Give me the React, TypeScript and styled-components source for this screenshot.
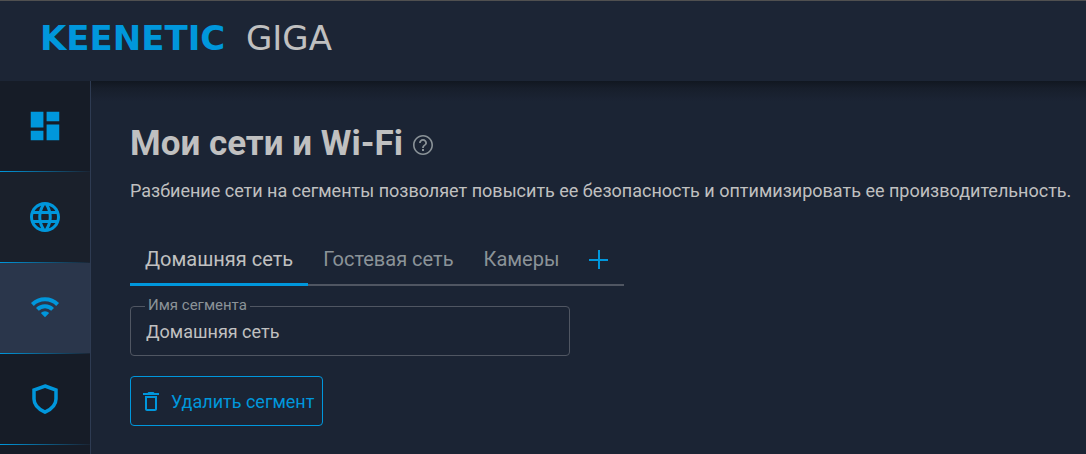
import React from "react";
import styled, { createGlobalStyle } from "styled-components";

const accent = "#0097dc";
const surface = "#1b2434";
const ink = "#c0c0c0";
const muted = "#8b9398";
const line = "#505662";

const GlobalStyle = createGlobalStyle`
  *, *::before, *::after { box-sizing: border-box; }
  body {
    margin: 0;
    background: ${surface};
    color: ${ink};
    font-family: Roboto, "Liberation Sans", sans-serif;
    font-size: 18px;
  }
  button, input { font: inherit; color: inherit; }
`;

const Page = styled.div`
  min-height: 100vh;
  display: flex;
  flex-direction: column;
`;

const Header = styled.header`
  display: flex;
  align-items: center;
  height: 81px;
  padding: 0 40px 6px;
  border-top: 1px solid #505050;
  background: #1c2535;
`;

const Brand = styled.a`
  display: flex;
  align-items: baseline;
  gap: 14px;
  color: ${ink};
  font-family: "DejaVu Sans", sans-serif;
  font-size: 34px;
  line-height: 40px;
  text-decoration: none;
`;

const BrandName = styled.span`
  min-width: 192px;
  color: ${accent};
  font-weight: 700;
`;

const Body = styled.div`
  flex: 1;
  display: flex;
`;

const Sidebar = styled.nav`
  flex: none;
  width: 91px;
  border-right: 1px solid #2e3b52;
  background: #161c27;
`;

const NavLink = styled.a<{ $tone?: string }>`
  display: flex;
  flex-direction: column;
  color: ${accent};
  background: ${(p) => p.$tone ?? "transparent"};

  &::after {
    content: "";
    height: 1px;
    background: linear-gradient(90deg, ${accent}, #1a2433);
  }
`;

const NavIcon = styled.span`
  display: flex;
  align-items: center;
  justify-content: center;
  height: 90px;
`;

const Main = styled.main`
  flex: 1;
  min-width: 0;
  padding: 40px 12px 28px 39px;
  background: linear-gradient(#111720, #171e2b 7px, ${surface} 20px);
`;

const TitleRow = styled.div`
  display: flex;
  align-items: center;
  gap: 8px;
`;

const Title = styled.h1`
  margin: 0;
  font-size: 35px;
  line-height: 46px;
  font-weight: 700;
`;

const HelpButton = styled.button`
  display: flex;
  margin-top: 2px;
  padding: 0;
  border: 0;
  background: none;
  color: ${muted};
`;

const Lead = styled.p`
  margin: 12px 0 32px;
  line-height: 24px;
`;

const Tabs = styled.div`
  display: flex;
  width: fit-content;
  height: 51px;
  box-shadow: inset 0 -2px ${line};
`;

const Tab = styled.button<{ $active?: boolean }>`
  display: flex;
  align-items: center;
  padding: 0 15px;
  border: 0;
  border-bottom: 3px solid ${(p) => (p.$active ? accent : "transparent")};
  background: none;
  color: ${(p) => (p.$active ? ink : muted)};
  font-size: 20px;
  line-height: 24px;
`;

const AddTab = styled(Tab)`
  color: ${accent};
`;

const Field = styled.div`
  position: relative;
  max-width: 440px;
  margin: 20px 0;
`;

const FieldLabel = styled.label`
  position: absolute;
  top: -10px;
  left: 15px;
  padding: 0 3px;
  background: ${surface};
  color: ${muted};
  font-size: 15px;
  line-height: 18px;
`;

const FieldInput = styled.input`
  display: block;
  width: 100%;
  height: 50px;
  padding: 0 15px;
  border: 1px solid ${line};
  border-radius: 4px;
  background: none;
  outline: none;
`;

const DeleteButton = styled.button`
  display: flex;
  align-items: center;
  gap: 8px;
  height: 50px;
  padding: 0 8px;
  border: 1px solid ${accent};
  border-radius: 4px;
  background: none;
  color: ${accent};
`;

type IconProps = { d: string; size: number };

const Icon = ({ d, size }: IconProps) => (
  <svg width={size} height={size} viewBox="0 0 24 24" fill="currentColor" aria-hidden="true">
    <path d={d} />
  </svg>
);

const paths = {
  dashboard: "M3 13h8V3H3v10zm0 8h8v-6H3v6zm10 0h8V11h-8v10zm0-18v6h8V3h-8z",
  globe:
    "M11.99 2C6.47 2 2 6.48 2 12s4.47 10 9.99 10C17.52 22 22 17.52 22 12S17.52 2 11.99 2zm6.93 6h-2.95c-.32-1.25-.78-2.45-1.38-3.56 1.84.63 3.37 1.91 4.33 3.56zM12 4.04c.83 1.2 1.48 2.53 1.91 3.96h-3.82c.43-1.43 1.08-2.76 1.91-3.96zM4.26 14C4.1 13.36 4 12.69 4 12s.1-1.36.26-2h3.38c-.08.66-.14 1.32-.14 2s.06 1.34.14 2H4.26zm.82 2h2.95c.32 1.25.78 2.45 1.38 3.56-1.84-.63-3.37-1.9-4.33-3.56zm2.95-8H5.08c.96-1.66 2.49-2.93 4.33-3.56C8.81 5.55 8.35 6.75 8.03 8zM12 19.96c-.83-1.2-1.48-2.53-1.91-3.96h3.82c-.43 1.43-1.08 2.76-1.91 3.96zM14.34 14H9.66c-.09-.66-.16-1.32-.16-2s.07-1.35.16-2h4.68c.09.65.16 1.32.16 2s-.07 1.34-.16 2zm.25 5.56c.6-1.11 1.06-2.31 1.38-3.56h2.95c-.96 1.65-2.49 2.93-4.33 3.56zM16.36 14c.08-.66.14-1.32.14-2s-.06-1.34-.14-2h3.38c.16.64.26 1.31.26 2s-.1 1.36-.26 2h-3.38z",
  help: "M11 18h2v-2h-2v2zm1-16C6.48 2 2 6.48 2 12s4.48 10 10 10 10-4.48 10-10S17.52 2 12 2zm0 18.4c-4.63 0-8.4-3.77-8.4-8.4s3.77-8.4 8.4-8.4 8.4 3.77 8.4 8.4-3.77 8.4-8.4 8.4zm0-14.4c-2.21 0-4 1.79-4 4h1.8c0-1.2 1-2.2 2.2-2.2s2.2 1 2.2 2.2c0 2-3.1 1.8-3.1 5h1.8c0-2.3 3.1-2.5 3.1-5 0-2.21-1.79-4-4-4z",
  trash: "M6 20c0 1.1.9 2 2 2h8c1.1 0 2-.9 2-2V7H6v13zM8 9h8v11H8V9zm7.500-5l-1-1h-5l-1 1H4v2h16V4z",
};

const WifiIcon = () => (
  <svg width="30" height="30" viewBox="0 0 30 30" fill="none" stroke="currentColor" strokeWidth="4" aria-hidden="true">
    <path d="M2.4 11.5a17.8 17.8 0 0 1 25.2 0" />
    <path d="M7.4 16.4a10.8 10.8 0 0 1 15.2 0" />
    <path d="M10.8 20a6 6 0 0 1 8.4 0L15 24.3z" fill="currentColor" stroke="none" />
  </svg>
);

const ShieldIcon = () => (
  <svg width="30" height="32" viewBox="0 0 30 32" fill="none" stroke="currentColor" strokeWidth="3.5" aria-hidden="true">
    <path d="M15 3l11 4v9c0 6-4.4 10.200-11 13.200C8.400 26.200 4 22 4 16V7z" />
  </svg>
);

const PlusIcon = () => (
  <svg width="20" height="20" viewBox="0 0 20 20" fill="none" stroke="currentColor" strokeWidth="2" aria-hidden="true">
    <path d="M10 1v19M0 11h19" />
  </svg>
);

export default function App() {
  return (
    <Page>
      <GlobalStyle />
      <Header>
        <Brand href="#home">
          <BrandName>KEENETIC</BrandName>
          <span>GIGA</span>
        </Brand>
      </Header>
      <Body>
        <Sidebar>
          <NavLink href="#dashboard" aria-label="Системный монитор">
            <NavIcon><Icon d={paths.dashboard} size={38} /></NavIcon>
          </NavLink>
          <NavLink href="#internet" aria-label="Интернет" $tone="#1a202b">
            <NavIcon><Icon d={paths.globe} size={36} /></NavIcon>
          </NavLink>
          <NavLink href="#wifi" aria-label="Мои сети и Wi-Fi" aria-current="page" $tone="#2a364b">
            <NavIcon><WifiIcon /></NavIcon>
          </NavLink>
          <NavLink href="#security" aria-label="Сетевые правила">
            <NavIcon><ShieldIcon /></NavIcon>
          </NavLink>
        </Sidebar>
        <Main>
          <TitleRow>
            <Title>Мои сети и Wi-Fi</Title>
            <HelpButton type="button" aria-label="Справка">
              <Icon d={paths.help} size={24} />
            </HelpButton>
          </TitleRow>
          <Lead>
            Разбиение сети на сегменты позволяет повысить ее безопасность и оптимизировать ее производительность.
          </Lead>
          <Tabs role="tablist">
            <Tab type="button" role="tab" aria-selected="true" $active>Домашняя сеть</Tab>
            <Tab type="button" role="tab" aria-selected="false">Гостевая сеть</Tab>
            <Tab type="button" role="tab" aria-selected="false">Камеры</Tab>
            <AddTab type="button" aria-label="Добавить сегмент"><PlusIcon /></AddTab>
          </Tabs>
          <Field>
            <FieldLabel htmlFor="segment-name">Имя сегмента</FieldLabel>
            <FieldInput id="segment-name" type="text" defaultValue="Домашняя сеть" />
          </Field>
          <DeleteButton type="button">
            <Icon d={paths.trash} size={24} />
            Удалить сегмент
          </DeleteButton>
        </Main>
      </Body>
    </Page>
  );
}
